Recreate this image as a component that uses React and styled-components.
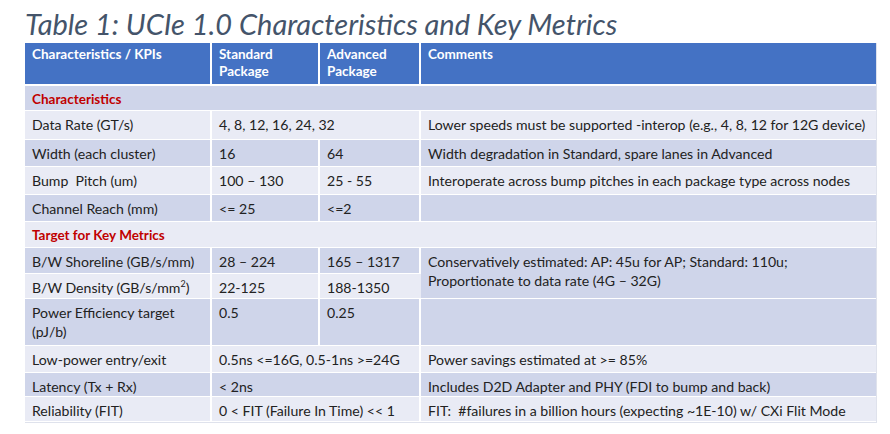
import React from "react";
import styled, { createGlobalStyle } from "styled-components";

const Global = createGlobalStyle`
  html, body { margin: 0; padding: 0; background: #fff; }
  * { box-sizing: border-box; }
`;

const Page = styled.div`
  width: 890px;
  height: 434px;
  padding: 6px 0 0 25px;
  font-family: Lato, "Open Sans", sans-serif;
  color: #222;
`;

const Title = styled.h1`
  margin: 0;
  font-family: Lato, sans-serif;
  font-style: italic;
  font-weight: 400;
  font-size: 29px;
  line-height: 36px;
  height: 37px;
  color: #44546a;
`;

const Table = styled.table`
  width: 851px;
  border-collapse: separate;
  border-spacing: 0;
  table-layout: fixed;
  font-size: 14.1px;
  border-right: 1px solid #dfe2ec;
  border-bottom: 1px solid #dfe2ec;
`;

const Row = styled.tr`
  height: ${(p) => p.$h}px;
`;

const Head = styled.th`
  background: #4472c4;
  color: #fff;
  font-size: 13.5px;
  font-weight: 700;
  text-align: left;
  vertical-align: top;
  padding: 3px 6px 0 7px;
  line-height: 17px;
  border-right: 2px solid #fff;
  border-bottom: 2px solid #fff;
  &:last-child { border-right: 0; }
`;

const Cell = styled.td`
  background: ${(p) => (p.$dark ? "#cfd5ea" : "#e9ebf5")};
  color: ${(p) => (p.$section ? "#c00000" : "#222")};
  font-weight: ${(p) => (p.$section ? 700 : 400)};
  font-size: ${(p) => (p.$section ? "13.5px" : "14.1px")};
  vertical-align: top;
  padding: 4px 6px 0 7px;
  line-height: 19px;
  white-space: nowrap;
  border-right: 2px solid #fff;
  border-bottom: 1px solid #fff;
  &:last-child { border-right: 0; }
`;

const Wrap = styled(Cell)`
  white-space: normal;
`;

const Sup = styled.sup`
  font-size: 9px;
  line-height: 0;
`;

export default function App() {
  return (
    <Page>
      <Global />
      <Title>Table 1: UCIe 1.0 Characteristics and Key Metrics</Title>
      <Table>
        <colgroup>
          <col style={{ width: 187 }} />
          <col style={{ width: 108 }} />
          <col style={{ width: 101 }} />
          <col style={{ width: 455 }} />
        </colgroup>
        <thead>
          <Row $h={43}>
            <Head>Characteristics / KPIs</Head>
            <Head>Standard<br />Package</Head>
            <Head>Advanced<br />Package</Head>
            <Head>Comments</Head>
          </Row>
        </thead>
        <tbody>
          <Row $h={25}>
            <Cell $dark $section colSpan={4}>Characteristics</Cell>
          </Row>
          <Row $h={29}>
            <Cell>Data Rate (GT/s)</Cell>
            <Cell colSpan={2}>4, 8, 12, 16, 24, 32</Cell>
            <Cell>Lower speeds must be supported -interop (e.g., 4, 8, 12 for 12G device)</Cell>
          </Row>
          <Row $h={27}>
            <Cell $dark>Width (each cluster)</Cell>
            <Cell $dark>16</Cell>
            <Cell $dark>64</Cell>
            <Cell $dark>Width degradation in Standard, spare lanes in Advanced</Cell>
          </Row>
          <Row $h={28}>
            <Cell>Bump&nbsp; Pitch (um)</Cell>
            <Cell>100 – 130</Cell>
            <Cell>25 - 55</Cell>
            <Cell>Interoperate across bump pitches in each package type across nodes</Cell>
          </Row>
          <Row $h={27}>
            <Cell $dark>Channel Reach (mm)</Cell>
            <Cell $dark>&lt;= 25</Cell>
            <Cell $dark>&lt;=2</Cell>
            <Cell $dark></Cell>
          </Row>
          <Row $h={26}>
            <Cell $section colSpan={4}>Target for Key Metrics</Cell>
          </Row>
          <Row $h={26}>
            <Cell $dark>B/W Shoreline (GB/s/mm)</Cell>
            <Cell $dark>28 – 224</Cell>
            <Cell $dark>165 – 1317</Cell>
            <Cell $dark rowSpan={2}>
              Conservatively estimated: AP: 45u for AP; Standard: 110u;
              <br />
              Proportionate to data rate (4G – 32G)
            </Cell>
          </Row>
          <Row $h={25}>
            <Cell>B/W Density (GB/s/mm<Sup>2</Sup>)</Cell>
            <Cell>22-125</Cell>
            <Cell>188-1350</Cell>
          </Row>
          <Row $h={47}>
            <Wrap $dark>Power Efficiency target (pJ/b)</Wrap>
            <Cell $dark>0.5</Cell>
            <Cell $dark>0.25</Cell>
            <Cell $dark></Cell>
          </Row>
          <Row $h={27}>
            <Cell>Low-power entry/exit</Cell>
            <Cell colSpan={2}>0.5ns &lt;=16G, 0.5-1ns &gt;=24G</Cell>
            <Cell>Power savings estimated at &gt;= 85%</Cell>
          </Row>
          <Row $h={24}>
            <Cell $dark>Latency (Tx + Rx)</Cell>
            <Cell $dark colSpan={2}>&lt; 2ns</Cell>
            <Cell $dark>Includes D2D Adapter and PHY (FDI to bump and back)</Cell>
          </Row>
          <Row $h={25}>
            <Cell>Reliability (FIT)</Cell>
            <Cell colSpan={2}>0 &lt; FIT (Failure In Time) &lt;&lt; 1</Cell>
            <Cell>FIT:&nbsp; #failures in a billion hours (expecting ~1E-10) w/ CXi Flit Mode</Cell>
          </Row>
        </tbody>
      </Table>
    </Page>
  );
}
